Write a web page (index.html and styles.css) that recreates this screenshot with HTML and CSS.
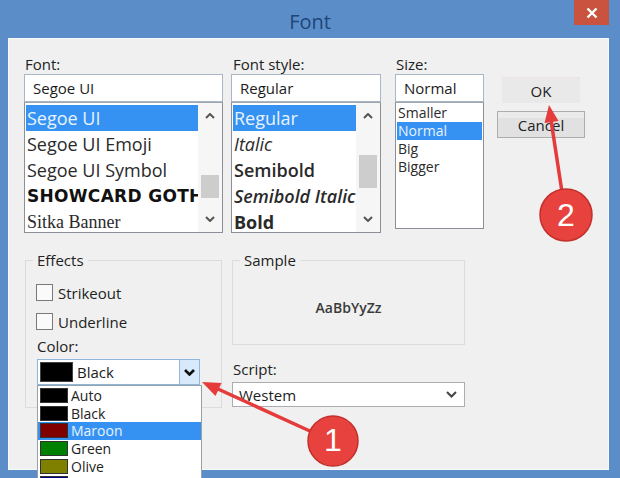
FILE: index.html
```html
<!doctype html>
<html>
<head>
    <title>Font</title>
    <link rel="stylesheet" href="styles.css">
</head>
<body>
<div class="window">
    <div class="titlebar">
        <span class="title">Font</span>
        <div class="close">
            <svg width="12" height="12" viewBox="0 0 12 12"><path d="M1.5 1.5 L10.5 10.5 M10.5 1.5 L1.5 10.5" stroke="#fff" stroke-width="2.4" fill="none"/></svg>
        </div>
    </div>
    <div class="client">
        <div class="top">
            <div class="col col-font">
                <div class="label">Font:</div>
                <div class="edit">Segoe UI</div>
                <div class="list">
                    <div class="items">
                        <div class="item sel">Segoe UI</div>
                        <div class="item">Segoe UI Emoji</div>
                        <div class="item">Segoe UI Symbol</div>
                        <div class="item showcard">SHOWCARD GOTHIC</div>
                        <div class="item sitka">Sitka Banner</div>
                    </div>
                    <div class="scroll">
                        <div class="arrow"><svg width="10" height="6" viewBox="0 0 10 6"><polyline points="1,5 5,1 9,5" fill="none" stroke="#555" stroke-width="2"/></svg></div>
                        <div class="track"><div class="thumb thumb-font"></div></div>
                        <div class="arrow"><svg width="10" height="6" viewBox="0 0 10 6"><polyline points="1,1 5,5 9,1" fill="none" stroke="#555" stroke-width="2"/></svg></div>
                    </div>
                </div>
            </div>
            <div class="col col-style">
                <div class="label">Font style:</div>
                <div class="edit">Regular</div>
                <div class="list">
                    <div class="items">
                        <div class="item sel">Regular</div>
                        <div class="item italic">Italic</div>
                        <div class="item semibold">Semibold</div>
                        <div class="item semibold italic">Semibold Italic</div>
                        <div class="item bold">Bold</div>
                    </div>
                    <div class="scroll">
                        <div class="arrow"><svg width="10" height="6" viewBox="0 0 10 6"><polyline points="1,5 5,1 9,5" fill="none" stroke="#555" stroke-width="2"/></svg></div>
                        <div class="track"><div class="thumb thumb-style"></div></div>
                        <div class="arrow"><svg width="10" height="6" viewBox="0 0 10 6"><polyline points="1,1 5,5 9,1" fill="none" stroke="#555" stroke-width="2"/></svg></div>
                    </div>
                </div>
            </div>
            <div class="col col-size">
                <div class="label">Size:</div>
                <div class="edit">Normal</div>
                <div class="list list-size">
                    <div class="items">
                        <div class="item">Smaller</div>
                        <div class="item sel">Normal</div>
                        <div class="item">Big</div>
                        <div class="item">Bigger</div>
                    </div>
                </div>
            </div>
            <div class="buttons">
                <div class="btn ok">OK</div>
                <div class="btn cancel">Cancel</div>
            </div>
        </div>

        <div class="bottom">
            <fieldset class="group effects">
                <legend>Effects</legend>
                <div class="check"><span class="box"></span>Strikeout</div>
                <div class="check"><span class="box"></span>Underline</div>
                <div class="label color-label">Color:</div>
                <div class="combo color-combo">
                    <span class="swatch sw-black"></span>
                    <span class="combo-text">Black</span>
                    <span class="drop">
                        <svg width="11" height="7" viewBox="0 0 11 7"><polyline points="1,1 5.5,5.5 10,1" fill="none" stroke="#111" stroke-width="2.6"/></svg>
                    </span>
                    <div class="popup">
                        <div class="pitem"><span class="pswatch sw-black"></span>Auto</div>
                        <div class="pitem"><span class="pswatch sw-black"></span>Black</div>
                        <div class="pitem sel"><span class="pswatch sw-maroon"></span>Maroon</div>
                        <div class="pitem"><span class="pswatch sw-green"></span>Green</div>
                        <div class="pitem"><span class="pswatch sw-olive"></span>Olive</div>
                        <div class="pitem"><span class="pswatch sw-navy"></span>Navy</div>
                    </div>
                </div>
            </fieldset>
            <div class="col-right">
                <fieldset class="group sample">
                    <legend>Sample</legend>
                    <div class="sample-text">AaBbYyZz</div>
                </fieldset>
                <div class="label script-label">Script:</div>
                <div class="combo script-combo">
                    <span class="combo-text">Westem</span>
                    <svg class="chev" width="11" height="7" viewBox="0 0 11 7"><polyline points="1,1 5.5,5.5 10,1" fill="none" stroke="#444" stroke-width="2"/></svg>
                </div>
            </div>
        </div>
    </div>

    <svg class="marks" width="620" height="478" viewBox="0 0 620 478">
        <line x1="562" y1="192" x2="551" y2="120" stroke="#e53b3b" stroke-width="3.5"/>
        <polygon points="549,105 558.5,121 544.5,123" fill="#e53b3b"/>
        <circle cx="566" cy="215" r="26" fill="#e8423e" stroke="#c3302c" stroke-width="1.5"/>
        <text x="566" y="226" class="num">2</text>

        <line x1="312" y1="432" x2="218" y2="389" stroke="#e53b3b" stroke-width="3.5"/>
        <polygon points="202,382 221.5,383 215.5,396" fill="#e53b3b"/>
        <circle cx="333" cy="441" r="25" fill="#e8423e" stroke="#c3302c" stroke-width="1.5"/>
        <text x="333" y="451" class="num">1</text>
    </svg>
</div>
</body>
</html>
```

FILE: styles.css
```css
* { box-sizing: border-box; }

body {
    margin: 0;
    font-family: "Open Sans", "Noto Sans", sans-serif;
    color: #1c1c1c;
}

.window {
    position: relative;
    width: 620px;
    height: 478px;
    overflow: hidden;
    background: #5b8ec9;
}

.titlebar {
    height: 38px;
    display: grid;
    grid-template-columns: 1fr auto 1fr;
}

.title {
    grid-column: 2;
    margin-top: 11px;
    font-size: 20px;
    line-height: 22px;
    color: #1f4579;
}

.close {
    grid-column: 3;
    justify-self: end;
    width: 35px;
    height: 25px;
    margin-right: 11px;
    background: #c9533f;
    display: flex;
    align-items: center;
    justify-content: center;
}

.client {
    width: 601px;
    height: 432px;
    margin-left: 8px;
    background: #f0f0f0;
    border: 1px solid #f8f9fb;
}

.label {
    font-size: 15px;
    line-height: 20px;
    height: 20px;
    padding-left: 1px;
    color: #222;
}

/* top row */
.top {
    display: flex;
    padding: 15px 0 0 15px;
}

.col-font { width: 199px; }
.col-style { width: 150px; margin-left: 8px; }
.col-size { width: 89px; margin-left: 14px; }

.col-style .label { padding-left: 2px; }

.edit {
    height: 28px;
    border: 1px solid #a9b6c6;
    background: #fff;
    font-size: 15px;
    line-height: 26px;
    padding-left: 8px;
}

.list {
    display: flex;
    height: 131px;
    border: 1px solid #8a8f98;
    border-top-color: #a0a6ae;
    background: #fff;
}

.items {
    flex: 1;
    min-width: 0;
    overflow: hidden;
    padding: 2px 0 0 1px;
}

.item {
    height: 26px;
    line-height: 26px;
    font-size: 18px;
    white-space: nowrap;
    overflow: hidden;
    padding-left: 1px;
    color: #2a2a2a;
}

.item.sel {
    background: #3592f2;
    color: #e8f2ff;
}

.item.italic { font-style: italic; }
.item.semibold { font-weight: 600; }
.item.bold { font-weight: 700; }

.item.showcard {
    font-family: "DejaVu Sans", sans-serif;
    font-weight: 700;
    font-size: 17px;
    letter-spacing: 0.3px;
    color: #111;
}

.item.sitka {
    font-family: "Liberation Serif", serif;
    font-size: 18px;
}

.scroll {
    width: 24px;
    display: flex;
    flex-direction: column;
    background: #f6f6f6;
}

.arrow {
    height: 26px;
    display: flex;
    align-items: center;
    justify-content: center;
}

.track { flex: 1; padding: 0 3px; }

.thumb { background: #cdcdcd; }
.thumb-font { margin-top: 46px; height: 23px; }
.thumb-style { margin-top: 26px; height: 33px; }

.list-size { height: 127px; }
.list-size .items { padding: 1px 1px 0 1px; }
.list-size .item {
    height: 18px;
    line-height: 18px;
    font-size: 14px;
}

.buttons {
    width: 88px;
    margin-left: 13px;
    padding-top: 23px;
}

.btn {
    display: flex;
    align-items: center;
    justify-content: center;
    font-size: 15px;
    color: #222;
}

.ok {
    width: 78px;
    height: 26px;
    margin-left: 5px;
    background: #e9e9e9;
    border-top: 1px solid #f1e2e2;
}

.cancel {
    height: 27px;
    margin-top: 8px;
    background: linear-gradient(#ebebeb 0, #ebebeb 6px, #e1e1e1 6px);
    border: 1px solid #adadad;
}

/* bottom part */
.bottom {
    display: flex;
    align-items: flex-start;
    margin-top: 17px;
    padding-left: 16px;
}

.group {
    margin: 0;
    padding: 0;
    min-inline-size: 0;
    border: 1px solid #dcdcdc;
}

.group legend {
    margin-left: 7px;
    padding: 0 4px;
    font-size: 15px;
    line-height: 20px;
    color: #222;
}

.effects {
    width: 197px;
    padding: 8px 0 22px 0;
}

.check {
    display: flex;
    align-items: center;
    height: 29px;
    margin-left: 10px;
    font-size: 15px;
    color: #222;
}

.box {
    width: 17px;
    height: 17px;
    margin-right: 5px;
    border: 1px solid #7a7a7a;
    background: #fafafa;
}

.color-label { margin-left: 10px; }

.combo {
    display: flex;
    align-items: center;
    background: #fff;
    font-size: 15px;
}

.color-combo {
    position: relative;
    width: 163px;
    height: 26px;
    margin: 3px 0 0 11px;
    border: 1px solid #8fb6dd;
}

.swatch {
    width: 33px;
    height: 20px;
    margin-left: 2px;
    border: 1px solid #444;
}

.combo-text { margin-left: 4px; }

.drop {
    margin-left: auto;
    width: 20px;
    height: 100%;
    display: flex;
    align-items: center;
    justify-content: center;
    background: #d7e9fb;
    border-left: 1px solid #8fb6dd;
}

.popup {
    position: absolute;
    left: -1px;
    top: calc(100% + 1px);
    width: 165px;
    padding-top: 1px;
    background: #fff;
    border: 1px solid #9aa0a8;
}

.pitem {
    display: flex;
    align-items: center;
    height: 17.6px;
    font-size: 14px;
    color: #222;
}

.pitem.sel {
    background: #3592f2;
    color: #e8f2ff;
}

.pswatch {
    width: 28px;
    height: 15px;
    margin: 0 3px 0 2px;
    border: 1px solid #333;
}

.sw-black { background: #000; }
.sw-maroon { background: #800000; }
.sw-green { background: #008000; }
.sw-olive { background: #808000; }
.sw-navy { background: #000080; }

.col-right {
    width: 233px;
    margin-left: 10px;
}

.sample .sample-text {
    height: 74px;
    display: flex;
    align-items: center;
    justify-content: center;
    font-size: 14px;
    font-weight: 600;
    color: #3a3a3a;
}

.script-label { margin-top: 14px; }

.script-combo {
    height: 25px;
    margin-top: 3px;
    padding: 0 7px 0 2px;
    border: 1px solid #abadb3;
}

.script-combo .chev { margin-left: auto; }

.marks {
    position: absolute;
    top: 0;
    left: 0;
    pointer-events: none;
}

.num {
    font-family: "Liberation Sans", Arial, sans-serif;
    font-size: 32px;
    fill: #fff;
    text-anchor: middle;
}
```
